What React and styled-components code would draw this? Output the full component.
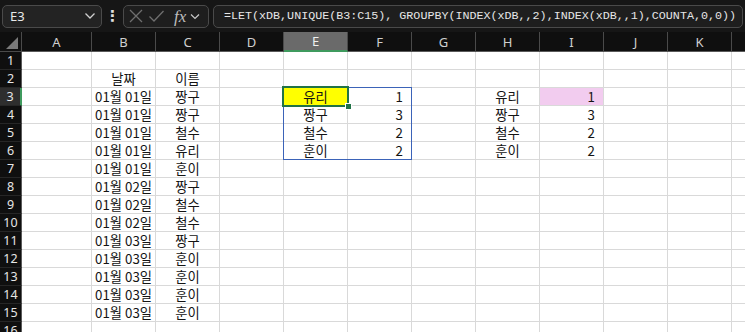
import React from 'react'
import styled, { createGlobalStyle } from 'styled-components'

const GlobalStyle = createGlobalStyle`
  html, body {
    margin: 0;
    padding: 0;
    background: #161616;
  }
`

// last column is only partly visible at the right edge, so it has no letter shown
const COLS = ['A', 'B', 'C', 'D', 'E', 'F', 'G', 'H', 'I', 'J', 'K', '']

const dates = ['01월 01일', '01월 01일', '01월 01일', '01월 01일', '01월 01일', '01월 02일', '01월 02일', '01월 02일', '01월 03일', '01월 03일', '01월 03일', '01월 03일', '01월 03일']
const names = ['짱구', '짱구', '철수', '유리', '훈이', '짱구', '철수', '철수', '짱구', '훈이', '훈이', '훈이', '훈이']
const summary = [['유리', 1], ['짱구', 3], ['철수', 2], ['훈이', 2]]

// build the cell map: key "B3" -> { v, align, fill }
function buildCells() {
  const cells = {}
  cells.B2 = { v: '날짜', align: 'center' }
  cells.C2 = { v: '이름', align: 'center' }
  dates.forEach((d, i) => {
    cells['B' + (i + 3)] = { v: d, align: 'right' }
    cells['C' + (i + 3)] = { v: names[i], align: 'center' }
  })
  summary.forEach(([n, c], i) => {
    const r = i + 3
    cells['E' + r] = { v: n, align: 'center', fill: r === 3 ? '#ffff00' : null }
    cells['F' + r] = { v: c, align: 'num' }
    cells['H' + r] = { v: n, align: 'center' }
    cells['I' + r] = { v: c, align: 'num', fill: r === 3 ? '#f2ccef' : null }
  })
  return cells
}

function App() {
  const cells = buildCells()
  const rows = Array.from({ length: 16 }, (_, i) => i + 1)

  return (
    <Wrapper>
      <GlobalStyle />
      <TopBar>
        <NameBox>
          <span>E3</span>
          <svg width="12" height="8" viewBox="0 0 12 8">
            <path d="M1.5 1.5 L6 6 L10.5 1.5" fill="none" stroke="#d0d0d0" strokeWidth="1.3" />
          </svg>
        </NameBox>
        <Dots>⋮</Dots>
        <FxBox>
          <svg width="16" height="16" viewBox="0 0 16 16">
            <path d="M2 2 L14 14 M14 2 L2 14" stroke="#6f6f6f" strokeWidth="1.3" fill="none" />
          </svg>
          <svg width="17" height="16" viewBox="0 0 17 16">
            <path d="M1.5 8.5 L6 13 L15.5 3" stroke="#6f6f6f" strokeWidth="1.3" fill="none" />
          </svg>
          <Fx>fx</Fx>
          <svg width="10" height="7" viewBox="0 0 10 7">
            <path d="M1 1.5 L5 5.5 L9 1.5" fill="none" stroke="#c8c8c8" strokeWidth="1.2" />
          </svg>
        </FxBox>
        <FormulaBar>=LET(xDB,UNIQUE(B3:C15), GROUPBY(INDEX(xDB,,2),INDEX(xDB,,1),COUNTA,0,0))</FormulaBar>
      </TopBar>

      <Sheet>
        <Corner $r={1} $c={1}>
          <svg width="12" height="12" viewBox="0 0 12 12">
            <path d="M12 0 L12 12 L0 12 Z" fill="#7a7a7a" />
          </svg>
        </Corner>
        {COLS.map((c, ci) => (
          <ColHeader key={'h' + ci} $r={1} $c={ci + 2} $active={c === 'E'}>{c}</ColHeader>
        ))}
        {rows.map((r) => (
          <React.Fragment key={r}>
            <RowHeader $r={r + 1} $c={1} $active={r === 3}>{r}</RowHeader>
            {COLS.map((c, ci) => {
              const cell = cells[c + r]
              return (
                <Cell
                  key={ci + '-' + r}
                  $r={r + 1}
                  $c={ci + 2}
                  $align={cell ? cell.align : 'left'}
                  $fill={cell ? cell.fill : null}
                >
                  {cell ? cell.v : ''}
                </Cell>
              )
            })}
          </React.Fragment>
        ))}
        <SpillRange />
        <Selection>
          <FillHandle />
        </Selection>
      </Sheet>
    </Wrapper>
  )
}

const Wrapper = styled.div`
  width: 745px;
  height: 332px;
  overflow: hidden;
  background: #161616;
`

const TopBar = styled.div`
  display: flex;
  align-items: center;
  height: 32px;
  padding: 0 2px;
  box-sizing: border-box;
`

const NameBox = styled.div`
  width: 100px;
  height: 23px;
  box-sizing: border-box;
  border: 1px solid #4a4a4a;
  border-radius: 5px;
  background: #232323;
  display: flex;
  align-items: center;
  justify-content: space-between;
  padding: 0 5px 0 7px;
  color: #e8e8e8;
  font-family: "Noto Sans", "Open Sans", sans-serif;
  font-size: 13px;
`

const Dots = styled.div`
  width: 21px;
  text-align: center;
  color: #e0e0e0;
  font-family: "DejaVu Sans", sans-serif;
  font-size: 15px;
  font-weight: bold;
`

const FxBox = styled.div`
  width: 86px;
  height: 23px;
  box-sizing: border-box;
  border: 1px solid #4a4a4a;
  border-radius: 5px;
  background: #1e1e1e;
  display: flex;
  align-items: center;
  gap: 4px;
  padding: 0 3px 0 4px;
`

const Fx = styled.span`
  font-family: "Liberation Serif", "DejaVu Serif", serif;
  font-style: italic;
  font-size: 17px;
  color: #bdbdbd;
  margin-left: 5px;
  line-height: 1;
`

const FormulaBar = styled.div`
  flex: 1;
  margin-left: 4px;
  height: 23px;
  box-sizing: border-box;
  border: 1px solid #4a4a4a;
  border-radius: 5px;
  background: #1e1e1e;
  display: flex;
  align-items: center;
  padding-left: 10px;
  color: #e6e6e6;
  font-family: "Liberation Mono", "DejaVu Sans Mono", monospace;
  font-size: 11.7px;
  white-space: nowrap;
  overflow: hidden;
`

const Sheet = styled.div`
  display: grid;
  grid-template-columns: 22px 70px repeat(11, 64px);
  grid-template-rows: 20px repeat(16, 18px);
  width: 745px;
  overflow: hidden;
  background: #ffffff;
  font-family: "Noto Sans CJK KR", "Noto Sans", sans-serif;
`

const Placed = styled.div`
  grid-row: ${(p) => p.$r};
  grid-column: ${(p) => p.$c};
  box-sizing: border-box;
`

const Corner = styled(Placed)`
  background: #0f0f0f;
  border-right: 1px solid #4a4a4a;
  border-bottom: 1px solid #4a4a4a;
  display: flex;
  align-items: flex-end;
  justify-content: flex-end;
  padding: 0 3px 2px 0;
`

const ColHeader = styled(Placed)`
  background: ${(p) => (p.$active ? '#6a6a6a' : '#0f0f0f')};
  color: ${(p) => (p.$active ? '#f0f0f0' : '#cfcfcf')};
  border-right: 1px solid #4a4a4a;
  border-bottom: ${(p) => (p.$active ? '2px solid #3f9a5e' : '1px solid #5a5a5a')};
  display: flex;
  align-items: center;
  justify-content: center;
  font-family: "Noto Sans", "Open Sans", sans-serif;
  font-size: 13px;
`

const RowHeader = styled(Placed)`
  background: ${(p) => (p.$active ? '#2e2e2e' : '#0f0f0f')};
  color: #e6e6e6;
  border-right: ${(p) => (p.$active ? '2px solid #3f9a5e' : '1px solid #5a5a5a')};
  border-bottom: 1px solid #262626;
  display: flex;
  align-items: center;
  justify-content: center;
  font-family: "Noto Sans", "Open Sans", sans-serif;
  font-size: 12.5px;
`

const Cell = styled(Placed)`
  background: ${(p) => p.$fill || '#ffffff'};
  border-right: 1px solid #d9d9d9;
  border-bottom: 1px solid #d9d9d9;
  color: #141414;
  font-size: 13.3px;
  line-height: 17px;
  white-space: nowrap;
  text-align: ${(p) => (p.$align === 'num' ? 'right' : p.$align)};
  padding: ${(p) => (p.$align === 'num' ? '0 8px 0 0' : p.$align === 'right' ? '0 3px 0 0' : '0 2px')};
`

const SpillRange = styled.div`
  grid-row: 4 / 8;
  grid-column: 6 / 8;
  margin: -1px 0 0 -1px;
  border: 1px solid #3b63b8;
  pointer-events: none;
`

const Selection = styled.div`
  grid-row: 4 / 5;
  grid-column: 6 / 7;
  margin: -2px -1px -1px -2px;
  border: 2px solid #217346;
  position: relative;
  pointer-events: none;
`

const FillHandle = styled.div`
  position: absolute;
  right: -5px;
  bottom: -5px;
  width: 5px;
  height: 5px;
  background: #217346;
  border: 1px solid #ffffff;
`

export default App
